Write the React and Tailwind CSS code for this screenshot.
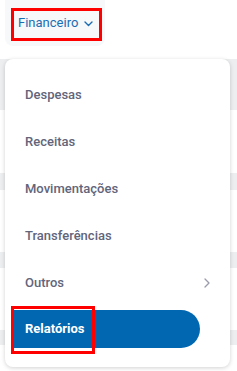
import React from "react";

export default function App() {
  const items = ["Despesas", "Receitas", "Movimentações", "Transferências"];
  return (
    <div className="relative w-[237px] h-[371px] bg-white overflow-hidden" style={{ fontFamily: "Roboto, 'Noto Sans', sans-serif" }}>
      {/* top bar */}
      <div className="h-[59px] pl-[5px]">
        <div className="w-[100px] h-[46px] rounded-b-[8px] bg-[#f7f8f9] flex items-center pl-[13px] pb-[1px]">
          <span className="text-[13px] text-[#1b6db3] leading-none">Financeiro</span>
          <svg className="ml-[6px] mt-[2px]" width="9" height="6" viewBox="0 0 9 6" fill="none">
            <path d="M1 1l3.5 3.5L8 1" stroke="#1b6db3" strokeWidth="1.4" strokeLinecap="round" strokeLinejoin="round" />
          </svg>
        </div>
      </div>
      {/* background rows */}
      <div className="flex flex-col">
        <div className="h-[51px] bg-[#eceeef]" />
        <div className="h-[63px]" />
        <div className="h-[17px] bg-[#eceeef]" />
        <div className="h-[62px]" />
        <div className="h-[16px] bg-[#eceeef]" />
        <div className="h-[62px]" />
        <div className="h-[15px] bg-[#eceeef]" />
      </div>
      {/* red box top */}
      <div className="absolute left-[11px] top-[8px] w-[91px] h-[33px] border-[3px] border-[#ff0000]" />
      {/* menu */}
      <div className="absolute left-[5px] top-[59px] w-[225px] h-[308px] bg-white rounded-[8px] shadow-[0_1px_4px_rgba(0,0,0,0.18)] pt-[12px]">
        {items.map((t) => (
          <div key={t} className="h-[47px] flex items-center pl-[20px] text-[13px] font-medium text-[#62657a]">
            {t}
          </div>
        ))}
        <div className="h-[47px] flex items-center justify-between pl-[20px] pr-[20px] text-[13px] font-medium text-[#62657a]">
          <span>Outros</span>
          <svg width="6" height="10" viewBox="0 0 6 10" fill="none">
            <path d="M1 1l4 4-4 4" stroke="#9a9cab" strokeWidth="1.3" strokeLinecap="round" strokeLinejoin="round" />
          </svg>
        </div>
        <div className="pl-[9px] pt-[4px]">
          <div className="w-[186px] h-[38px] bg-[#0067b0] rounded-r-full flex items-center pl-[11px] text-[13px] font-bold text-white">
            Relatórios
          </div>
        </div>
      </div>
      {/* red box bottom */}
      <div className="absolute left-[11px] top-[306px] w-[84px] h-[48px] border-[3px] border-[#ff0000]" />
    </div>
  );
}
